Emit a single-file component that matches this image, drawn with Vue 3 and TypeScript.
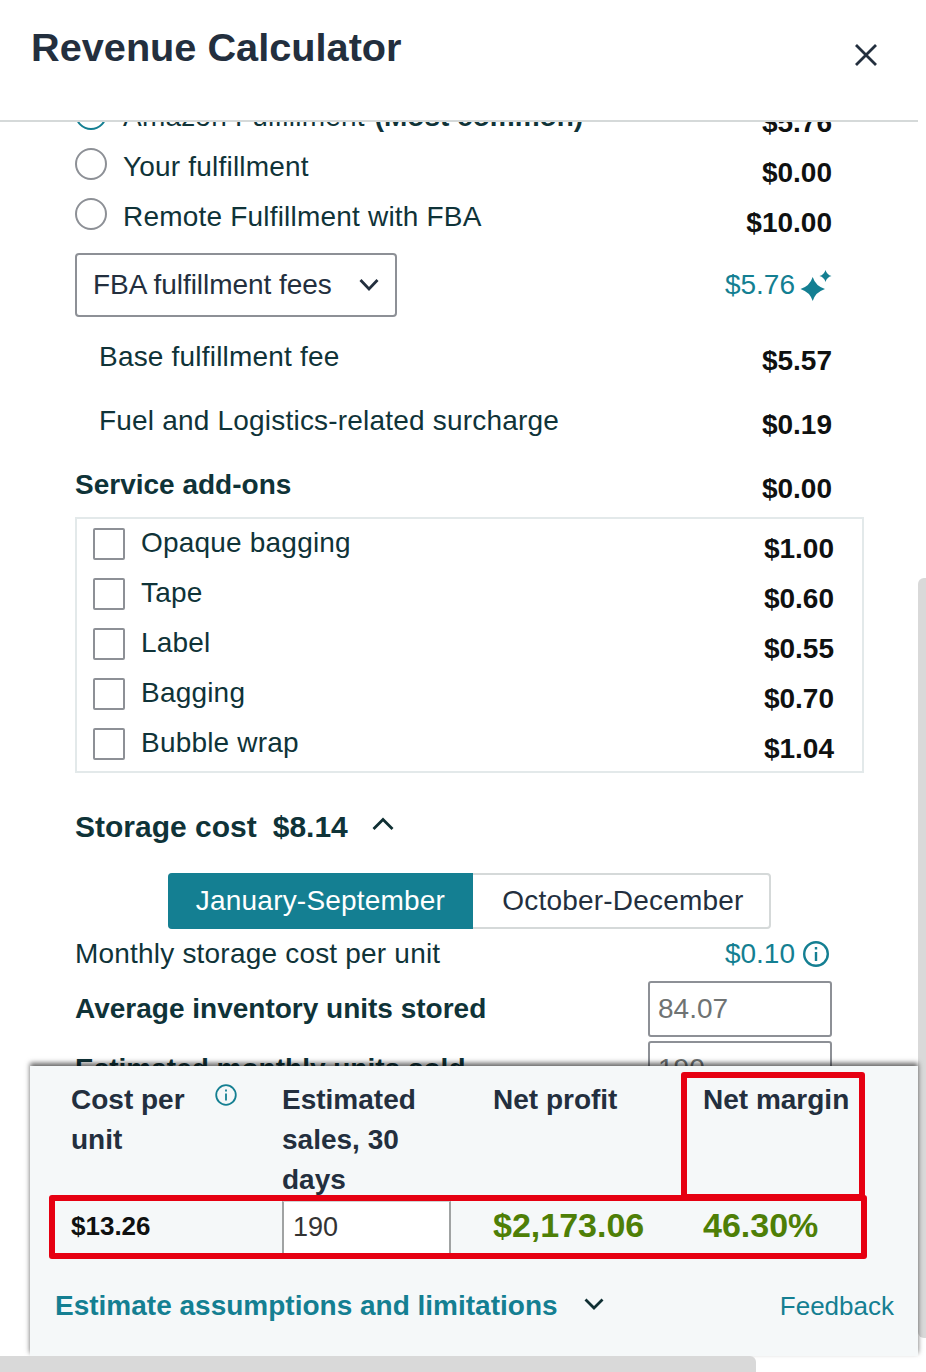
<script setup lang="ts">
interface Row { label: string; price: string }
const addons: Row[] = [
  { label: 'Opaque bagging', price: '$1.00' },
  { label: 'Tape', price: '$0.60' },
  { label: 'Label', price: '$0.55' },
  { label: 'Bagging', price: '$0.70' },
  { label: 'Bubble wrap', price: '$1.04' },
]
</script>

<template>
  <div class="page">
    <header class="head">
      <h1 class="title">Revenue Calculator</h1>
      <svg class="close" viewBox="0 0 24 24" width="24" height="24" aria-hidden="true">
        <path d="M2 2 L22 22 M22 2 L2 22" fill="none" stroke="#232f3e" stroke-width="2.8" />
      </svg>
    </header>

    <main class="body">
      <div class="scrollbar"></div>
      <div class="content">
        <div class="radio-row first">
          <span class="radio-wrap"><span class="radio selected"></span><span class="rlabel">Amazon Fulfillment <b>(Most common)</b></span></span>
          <b class="price">$5.76</b>
        </div>
        <div class="radio-row">
          <span class="radio-wrap"><span class="radio"></span><span class="rlabel">Your fulfillment</span></span>
          <b class="price">$0.00</b>
        </div>
        <div class="radio-row">
          <span class="radio-wrap"><span class="radio"></span><span class="rlabel">Remote Fulfillment with FBA</span></span>
          <b class="price">$10.00</b>
        </div>

        <div class="select-row">
          <div class="select">
            <span>FBA fulfillment fees</span>
            <svg viewBox="0 0 20 14" width="20" height="14" aria-hidden="true">
              <path d="M1.5 2 L10 11 L18.5 2" fill="none" stroke="#232f3e" stroke-width="2.8" />
            </svg>
          </div>
          <span class="teal-val">$5.76
            <svg class="sparkle" viewBox="0 0 32 32" width="32" height="32" aria-hidden="true">
              <path d="M12.700 8 Q15.500 17 25 20 Q15.500 23 12.700 32 Q9.900 23 0.500 20 Q9.900 17 12.700 8Z" fill="#147f92" />
              <path d="M25.500 1 Q26.800 5.700 31.500 7 Q26.800 8.300 25.500 13 Q24.200 8.300 19.500 7 Q24.200 5.700 25.500 1Z" fill="#147f92" />
            </svg>
          </span>
        </div>

        <div class="fee-row"><span>Base fulfillment fee</span><b class="price">$5.57</b></div>
        <div class="fee-row"><span>Fuel and Logistics-related surcharge</span><b class="price">$0.19</b></div>
        <div class="addon-head"><b>Service add-ons</b><b class="price">$0.00</b></div>

        <div class="addons">
          <div v-for="a in addons" :key="a.label" class="addon">
            <span class="check"></span>
            <span class="alabel">{{ a.label }}</span>
            <b class="price">{{ a.price }}</b>
          </div>
        </div>

        <div class="storage-head">
          <b>Storage cost</b><b>$8.14</b>
          <svg viewBox="0 0 22 14" width="22" height="14" aria-hidden="true">
            <path d="M1.500 12 L11 2.500 L20.500 12" fill="none" stroke="#0f2f33" stroke-width="2.800" />
          </svg>
        </div>

        <div class="toggle-wrap">
          <div class="toggle">
            <span class="tab active">January-September</span>
            <span class="tab rest">October-December</span>
          </div>
        </div>

        <div class="monthly">
          <span class="mlabel">Monthly storage cost per unit</span>
          <span class="teal-val small">$0.10
            <svg viewBox="0 0 28 28" width="28" height="28" aria-hidden="true">
              <circle cx="14" cy="14" r="11.800" fill="none" stroke="#147f92" stroke-width="2.400" />
              <path d="M14 12 V21 M14 7 V9.500" stroke="#147f92" stroke-width="2.400" fill="none" />
            </svg>
          </span>
        </div>

        <div class="field-row">
          <b>Average inventory units stored</b>
          <span class="box">84.07</span>
        </div>
        <div class="field-row last">
          <b>Estimated monthly units sold</b>
          <span class="box">190</span>
        </div>
      </div>
    </main>

    <footer class="foot">
      <div class="grid">
        <div class="th cost">
          <span>Cost per<br />unit</span>
          <svg class="info" viewBox="0 0 22 22" width="22" height="22" aria-hidden="true">
            <circle cx="11" cy="11" r="9.800" fill="none" stroke="#147f92" stroke-width="1.800" />
            <path d="M11 9.500 V16.500 M11 5.500 V7.500" stroke="#147f92" stroke-width="1.800" fill="none" />
          </svg>
        </div>
        <div class="th">Estimated sales, 30 days</div>
        <div class="th">Net profit</div>
        <div class="th">Net margin</div>
        <div class="td unit">$13.26</div>
        <div class="td units-cell"><span class="units">190</span></div>
        <div class="td green">$2,173.06</div>
        <div class="td green">46.30%</div>
      </div>
      <div class="foot-links">
        <span class="assume">
          <b>Estimate assumptions and limitations</b>
          <svg viewBox="0 0 20 12" width="20" height="12" aria-hidden="true">
            <path d="M1.500 1.500 L10 10 L18.500 1.500" fill="none" stroke="#0f2f33" stroke-width="2.800" />
          </svg>
        </span>
        <span class="feedback">Feedback</span>
      </div>
      <div class="mark mark-row"></div>
      <div class="mark mark-col"></div>
    </footer>
    <div class="hbar"></div>
  </div>
</template>

<style>
html, body { margin: 0; padding: 0; background: #fff; }
</style>

<style scoped>
.page {
  position: relative;
  width: 926px;
  height: 1372px;
  overflow: hidden;
  display: flex;
  flex-direction: column;
  background: #fff;
  font-family: "Liberation Sans", Arial, sans-serif;
  font-size: 28px;
  color: #0f3338;
}
.head {
  flex: none;
  width: 918px;
  height: 122px;
  box-sizing: border-box;
  border-bottom: 2px solid #d5d9d9;
  display: flex;
  justify-content: space-between;
  align-items: flex-start;
  padding-left: 31px;
  background: #fff;
  position: relative;
  z-index: 2;
}
.title {
  margin: 23px 0 0;
  font-size: 39.700px;
  line-height: 48px;
  font-weight: 700;
  color: #232f3e;
}
.close { margin: 43px 40px 0 0; }
.body {
  flex: 1;
  min-height: 0;
  position: relative;
  overflow: hidden;
}
.scrollbar {
  position: absolute;
  right: 0;
  top: 456px;
  width: 8px;
  height: 760px;
  background: #d9d9d9;
  border-radius: 6px 0 0 6px;
  z-index: 3;
}
.content {
  margin-top: -24px;
  padding-left: 75px;
  width: 757px;
}
.price { color: #0f1111; font-weight: 700; }
.radio-row {
  height: 50px;
  display: flex;
  justify-content: space-between;
}
.radio-wrap { display: flex; gap: 16px; }
.radio {
  width: 32px;
  height: 32px;
  box-sizing: border-box;
  border: 2px solid #8d9096;
  border-radius: 50%;
}
.radio.selected { border-color: #147f92; }
.rlabel { line-height: 38px; letter-spacing: 0.2px; }
.rlabel b { letter-spacing: 0; margin-left: 2px; }
.radio-row .price { line-height: 46px; padding-top: 2px; }
.select-row {
  margin-top: 5px;
  display: flex;
  justify-content: space-between;
  align-items: center;
}
.select {
  width: 322px;
  height: 64px;
  box-sizing: border-box;
  border: 2px solid #8d9096;
  border-radius: 4px;
  padding: 0 16px;
  display: flex;
  align-items: center;
  justify-content: space-between;
  color: #232f3e;
  letter-spacing: -0.05px;
}
.teal-val {
  color: #147f92;
  display: inline-flex;
  align-items: center;
  gap: 5px;
}
.fee-row {
  margin-top: 8px;
  height: 56px;
  padding-left: 24px;
  display: flex;
  justify-content: space-between;
  line-height: 64px;
}
.fee-row span { letter-spacing: 0.2px; }
.fee-row .price { line-height: 72px; }
.addon-head {
  margin-top: 8px;
  height: 56px;
  display: flex;
  justify-content: space-between;
  line-height: 64px;
}
.addon-head .price { line-height: 72px; }
.addons {
  width: 789px;
  height: 256px;
  box-sizing: border-box;
  border: 2px solid #e3e9ea;
  padding: 0 28px 0 16px;
  margin-top: 8px;
}
.addon {
  height: 50px;
  display: flex;
  align-items: center;
}
.check {
  width: 32px;
  height: 32px;
  box-sizing: border-box;
  border: 2px solid #8d9096;
  border-radius: 2px;
  margin-right: 16px;
}
.alabel { flex: 1; line-height: 46px; margin-top: -2px; letter-spacing: 0.2px; }
.addon .price { padding-top: 10px; }
.storage-head {
  margin-top: 32px;
  height: 44px;
  display: flex;
  align-items: center;
  gap: 16px;
  font-size: 30px;
  line-height: 44px;
}
.storage-head svg { margin-left: 8px; margin-top: -6px; }
.toggle-wrap {
  margin-top: 24px;
  padding-left: 93px;
}
.toggle {
  display: flex;
  width: 603px;
  height: 56px;
  box-sizing: border-box;
  border: 2px solid #d5d9d9;
  border-radius: 4px;
  color: #232f3e;
  letter-spacing: 0.2px;
}
.tab {
  flex: 1 1 auto;
  display: flex;
  align-items: center;
  justify-content: center;
}
.tab.rest { padding-left: 4px; }
.tab.active {
  background: #147f92;
  color: #fff;
  margin: -2px 0 -2px -2px;
  border-radius: 4px 0 0 4px;
  width: 305px;
  flex: none;
}
.monthly {
  height: 50px;
  display: flex;
  justify-content: space-between;
  align-items: center;
}
.mlabel { letter-spacing: 0.2px; }
.monthly .teal-val { margin-right: 2px; gap: 7px; }
.field-row {
  height: 60px;
  display: flex;
  justify-content: space-between;
  align-items: center;
}
.box {
  width: 184px;
  height: 56px;
  box-sizing: border-box;
  border: 2px solid #8d9096;
  border-radius: 3px;
  padding-left: 8px;
  line-height: 52px;
  color: #6f7373;
}
.foot {
  position: absolute;
  left: 30px;
  top: 1066px;
  width: 888px;
  height: 290px;
  background: #f5f8f9;
  box-shadow: 0 -3px 5px rgba(0, 0, 0, 0.6);
  z-index: 4;
  box-sizing: border-box;
  padding: 14px 0 0 41px;
}
.grid {
  display: grid;
  grid-template-columns: 211px 211px 210px 180px;
  grid-template-rows: 120px 56px;
  font-size: 28px;
  line-height: 40px;
}
.th { font-weight: 700; color: #232f3e; padding-right: 30px; }
.th:nth-child(4) { padding-right: 0; white-space: nowrap; }
.cost { position: relative; padding: 0; }
.info { position: absolute; left: 144px; top: 4px; }
.td { display: flex; align-items: center; padding-bottom: 4px; }
.unit { font-weight: 700; font-size: 26px; color: #0f1111; }
.units-cell { padding-bottom: 0; align-items: flex-start; }
.units {
  width: 169px;
  height: 54px;
  margin-top: 1px;
  box-sizing: border-box;
  background: #fff;
  border-style: solid;
  border-color: #d0d3d3 #a0a3a3 #a0a3a3;
  border-width: 1px 2px 0;
  padding-left: 9px;
  line-height: 51px;
  font-size: 27px;
  color: #333;
}
.green { color: #4e7f07; font-size: 34px; font-weight: 700; padding-bottom: 7px; }
.foot-links {
  position: absolute;
  left: 25px;
  right: 24px;
  top: 224px;
  display: flex;
  justify-content: space-between;
  align-items: center;
}
.assume { display: inline-flex; align-items: center; gap: 26px; color: #147f92; font-size: 28px; }
.assume svg { margin-top: -4px; }
.feedback { color: #147f92; font-size: 26px; }
.mark { position: absolute; border: 6px solid #e60012; box-sizing: border-box; }
.mark-row { left: 19px; top: 129px; width: 818px; height: 64px; border-radius: 3px; }
.mark-col { left: 651px; top: 6px; width: 184px; height: 128px; border-radius: 3px; }
.hbar {
  position: absolute;
  left: 0;
  bottom: 0;
  width: 756px;
  height: 16px;
  background: #d9d9d9;
  border-radius: 0 6px 0 0;
  z-index: 5;
}
</style>
